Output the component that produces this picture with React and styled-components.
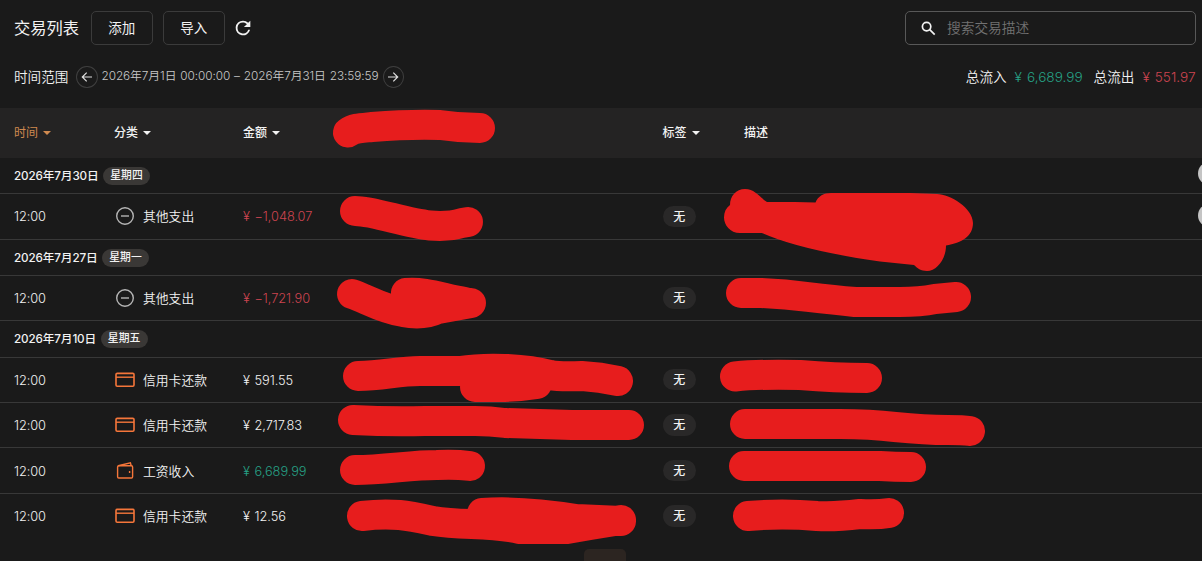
import React from "react";
import styled, { createGlobalStyle } from "styled-components";

const Global = createGlobalStyle`
  * { box-sizing: border-box; }
  html, body { margin: 0; background: #1a1a1a; overflow: hidden; }
  button, input { font: inherit; color: inherit; }
`;

const Page = styled.main`
  position: relative;
  width: 1202px;
  height: 561px;
  overflow: hidden;
  background: #1a1a1a;
  color: #f2f2f2;
  font-family: Inter, "Noto Sans CJK SC", sans-serif;
  font-weight: 350;
  font-size: 13px;
  line-height: 20px;
  white-space: nowrap;
`;

const Toolbar = styled.header`
  display: flex;
  align-items: center;
  height: 56px;
  padding: 0 6px 0 14px;
`;

const Title = styled.h1`
  margin: 0 12px 0 0;
  width: 65px;
  font-size: 16.3px;
  font-weight: 400;
  line-height: 24px;
`;

const Button = styled.button`
  width: 61.5px;
  height: 34px;
  margin-right: 10.5px;
  padding: 0;
  border: 1px solid #3b3b3b;
  border-radius: 5px;
  background: transparent;
  font-size: 13.5px;
  font-weight: 400;
`;

const IconButton = styled.button`
  display: flex;
  align-items: center;
  justify-content: center;
  width: 16px;
  height: 22px;
  padding: 0;
  border: 0;
  background: transparent;
  svg { flex: none; }
`;

const Search = styled.label`
  display: flex;
  align-items: center;
  gap: 11px;
  width: 291px;
  height: 34px;
  margin-left: auto;
  padding-left: 15px;
  border: 1px solid #585858;
  border-radius: 5px;
`;

const SearchInput = styled.input`
  flex: 1;
  min-width: 0;
  padding: 0;
  border: 0;
  outline: 0;
  background: transparent;
  font-size: 13.7px;
  &::placeholder { color: #727272; opacity: 1; }
`;

const RangeBar = styled.section`
  display: flex;
  align-items: center;
  height: 41px;
  margin-bottom: 10.5px;
  padding: 0 6.5px 0 14px;
  font-size: 13.6px;
`;

const RangeLabel = styled.span`
  width: 62px;
`;

const RangeText = styled.span`
  width: 277px;
  margin: 0 4px;
  padding-bottom: 1px;
  color: #c8c8c8;
  font-size: 11.8px;
  letter-spacing: -0.07px;
  word-spacing: 0.7px;
`;

const Arrow = styled.button`
  display: grid;
  place-items: center;
  width: 21.5px;
  height: 22px;
  padding: 0;
  border: 1px solid #3f3f3f;
  border-radius: 50%;
  background: transparent;
`;

const Totals = styled.div`
  display: flex;
  gap: 8px;
  margin-left: auto;
`;

const tones = { income: "#26a085", expense: "#cc4450", plain: "#f2f2f2" };

const Total = styled.span`
  color: ${(p) => tones[p.$tone || "plain"]};
  margin-right: ${(p) => (p.$gap ? "3px" : "0")};
  word-spacing: 1.2px;
`;

const columns = `
  display: grid;
  grid-template-columns: 100px 129px 419.5px 81.5px 1fr;
  align-items: center;
  padding-left: 14px;
`;

const TableHead = styled.div`
  ${columns}
  height: 50.5px;
  padding-top: 1px;
  background: #242323;
  font-size: 12px;
`;

const HeadCell = styled.span`
  display: flex;
  align-items: center;
  gap: 5px;
  color: ${(p) => (p.$active ? "#d08a50" : "#f2f2f2")};
  font-weight: ${(p) => (p.$active ? 400 : 500)};
`;

const Caret = styled.i`
  border: 4px solid transparent;
  border-top-color: currentColor;
  border-bottom: 0;
`;

const DateRow = styled.div`
  display: flex;
  align-items: center;
  gap: 4.5px;
  height: 36.25px;
  padding: 0.6px 0 0 14px;
  border-bottom: 1px solid #383838;
  font-size: 11.7px;
  font-weight: 500;
  letter-spacing: -0.14px;
`;

const DayBadge = styled.span`
  width: 47px;
  height: 18px;
  border-radius: 9px;
  background: #3a3836;
  font-size: 10.8px;
  letter-spacing: 0;
  line-height: 18px;
  text-align: center;
`;

const Row = styled.div`
  ${columns}
  height: 45.4px;
  padding-top: 1px;
  border-bottom: 1px solid ${(p) => (p.$last ? "transparent" : "#383838")};
  font-size: 12.8px;
  line-height: 21px;
`;

const Category = styled.span`
  display: flex;
  align-items: center;
  gap: 7px;
  svg { margin-bottom: 1px; }
`;

const Time = styled.span`
  letter-spacing: -0.1px;
`;

const Amount = styled.span`
  color: ${(p) => tones[p.$tone]};
  letter-spacing: -0.05px;
  word-spacing: 1.1px;
`;

const Tag = styled.span`
  width: 33.5px;
  height: 21.5px;
  margin-bottom: 1px;
  border-radius: 11px;
  background: #292828;
  font-size: 12px;
  font-weight: 500;
  line-height: 21px;
  text-align: center;
`;

const FloatingDot = styled.span`
  position: absolute;
  left: 1198px;
  top: ${(p) => p.$top}px;
  width: 23px;
  height: 23px;
  border-radius: 50%;
  background: #c4c4c4;
`;

const BottomTab = styled.span`
  position: absolute;
  left: 584px;
  top: 549px;
  width: 42px;
  height: 16px;
  border-radius: 5px;
  background: #2c2521;
`;

const Marks = styled.svg`
  position: absolute;
  inset: 0;
  fill: none;
  stroke: #e71d1d;
  stroke-width: 30;
  stroke-linecap: round;
  stroke-linejoin: round;
`;

const RefreshIcon = () => (
  <svg width="22" height="22" viewBox="0 0 24 24" fill="currentColor">
    <path d="M17.65 6.35A7.96 7.96 0 0 0 12 4a8 8 0 1 0 7.73 10h-2.08A6 6 0 1 1 12 6c1.66 0 3.14.69 4.22 1.78L13 11h7V4z" />
  </svg>
);

const SearchIcon = () => (
  <svg width="15" height="15" viewBox="0 0 15 15" fill="none" stroke="currentColor" strokeWidth="1.7">
    <circle cx="5.6" cy="5.6" r="4.2" />
    <path d="M8.7 8.7l5 5" />
  </svg>
);

const ArrowIcon = ({ right }) => (
  <svg width="12" height="12" viewBox="0 0 12 12" fill="none" stroke="#dedede" strokeWidth="1.2">
    <path d={right ? "M1 6h9.5M6.3 1.6L10.7 6l-4.4 4.4" : "M11 6H1.5M5.7 1.6L1.3 6l4.4 4.4"} />
  </svg>
);

const icons = {
  minus: (
    <svg width="22" height="22" viewBox="0 0 22 22" fill="none" stroke="#b5b5b5" strokeWidth="1.4">
      <circle cx="11" cy="11" r="8.3" />
      <path d="M7 11h8" />
    </svg>
  ),
  card: (
    <svg width="22" height="22" viewBox="0 0 22 22" fill="none" stroke="#f5763a" strokeWidth="1.6">
      <rect x="2" y="4.4" width="18" height="12.9" rx="1.2" />
      <path d="M2 8.2h18" strokeWidth="1.4" />
    </svg>
  ),
  wallet: (
    <svg width="22" height="22" viewBox="0 0 22 22" fill="none" stroke="#f5763a" strokeWidth="1.4">
      <rect x="3.6" y="5.8" width="15" height="12.2" rx="1.2" />
      <path d="M4.2 5.8L16.4 2.9l.8 2.9M15.6 11v2" />
    </svg>
  ),
};

const groups = [
  { date: "2026年7月30日", day: "星期四", rows: [["minus", "其他支出", "¥ −1,048.07", "expense"]] },
  { date: "2026年7月27日", day: "星期一", rows: [["minus", "其他支出", "¥ −1,721.90", "expense"]] },
  {
    date: "2026年7月10日",
    day: "星期五",
    rows: [
      ["card", "信用卡还款", "¥ 591.55", "plain"],
      ["card", "信用卡还款", "¥ 2,717.83", "plain"],
      ["wallet", "工资收入", "¥ 6,689.99", "income"],
      ["card", "信用卡还款", "¥ 12.56", "plain", true],
    ],
  },
];

const strokes = [
  "M348 132.500C354 128 361 128 372 127Q410 124 440 125Q460 128 480 128",
  "M355 211C374 211 405 223 430 225.500Q449 227 462 223L468 222",
  "M352 294C365 298 382 309 403 312Q423 316 438 309L471 303M406 293C425 291 445 299 465 302",
  "M358 376C383 376 397 371 420 371H460C485 367 525 368 550 375Q560 377 582 376Q600 377 618 381M475 387H500Q518 387 537 384",
  "M353 420Q390 422 425 421H475Q490 421 505 423Q540 424 572 425H629",
  "M355 470C385 470 410 465 437 465Q455 464 470 466",
  "M362 516C393 512 410 516 433 521C463 526 488 522 520 529H567L590 525L621 520M482 513C510 511 545 514 576 519L621 521",
  "M741 293H761Q785 294 808 297Q835 300 855 302H900Q920 302 935 299L956 297",
  "M735 376.500Q760 374 800 375Q835 378 867 378",
  "M745 424H840Q870 424 895 427Q925 430 948 430Q963 430 970 431",
  "M744 466H880Q895 467 911 467",
  "M748 516Q782 513 817 516Q835 517 860 514Q877 515 889 513",
];

const blob =
  "M730 205C730 196 736 189 745 189C755 189 758 196 767 202H795L815.500 202.500C818 196 824 193 831 193H910L937 194C950 194 973 208 973 223C973 236 962 243 946 245.500C946 259 937 271 927 271C921 271 917 268 914 265L880 261.500Q800 250 762 233H740C730 233 724 225 724 217.500C724 212 726 208 730 205Z";

export default function App() {
  return (
    <>
      <Global />
      <Page>
        <Toolbar>
          <Title>交易列表</Title>
          <Button>添加</Button>
          <Button>导入</Button>
          <IconButton aria-label="刷新"><RefreshIcon /></IconButton>
          <Search>
            <SearchIcon />
            <SearchInput placeholder="搜索交易描述" />
          </Search>
        </Toolbar>
        <RangeBar>
          <RangeLabel>时间范围</RangeLabel>
          <Arrow aria-label="上一个"><ArrowIcon /></Arrow>
          <RangeText>2026年7月1日 00:00:00 – 2026年7月31日 23:59:59</RangeText>
          <Arrow aria-label="下一个"><ArrowIcon right /></Arrow>
          <Totals>
            <Total>总流入</Total>
            <Total $tone="income" $gap>¥ 6,689.99</Total>
            <Total>总流出</Total>
            <Total $tone="expense">¥ 551.97</Total>
          </Totals>
        </RangeBar>
        <TableHead>
          <HeadCell $active>时间<Caret /></HeadCell>
          <HeadCell>分类<Caret /></HeadCell>
          <HeadCell>金额<Caret /></HeadCell>
          <HeadCell>标签<Caret /></HeadCell>
          <HeadCell>描述</HeadCell>
        </TableHead>
        {groups.map((g) => (
          <React.Fragment key={g.date}>
            <DateRow>
              <span>{g.date}</span>
              <DayBadge>{g.day}</DayBadge>
            </DateRow>
            {g.rows.map(([icon, name, amount, tone, last], i) => (
              <Row key={i} $last={last}>
                <Time>12:00</Time>
                <Category>{icons[icon]}{name}</Category>
                <Amount $tone={tone}>{amount}</Amount>
                <Tag>无</Tag>
              </Row>
            ))}
          </React.Fragment>
        ))}
        <FloatingDot $top={162} />
        <FloatingDot $top={204} />
        <BottomTab />
        <Marks width="1202" height="561" viewBox="0 0 1202 561">
          {strokes.map((d) => <path key={d} d={d} />)}
          <path d={blob} fill="#e71d1d" stroke="none" />
        </Marks>
      </Page>
    </>
  );
}
